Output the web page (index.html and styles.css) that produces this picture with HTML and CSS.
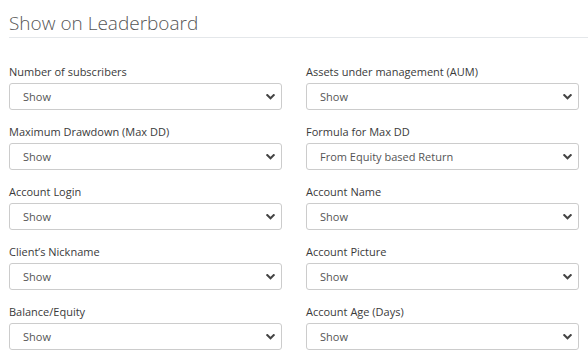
FILE: index.html
```html
<!DOCTYPE html>
<html>
<head>
<meta charset="utf-8">
<link rel="stylesheet" href="styles.css">
</head>
<body>
<div class="panel">
  <h2 class="title">Show on Leaderboard</h2>
  <div class="grid">
    <div class="field"><label>Number of subscribers</label><div class="select"><span>Show</span><svg class="chev" viewBox="0 0 10 7"><path d="M1.2 1.2 L5 5 L8.8 1.2"/></svg></div></div>
    <div class="field"><label>Assets under management (AUM)</label><div class="select"><span>Show</span><svg class="chev" viewBox="0 0 10 7"><path d="M1.2 1.2 L5 5 L8.8 1.2"/></svg></div></div>
    <div class="field"><label>Maximum Drawdown (Max DD)</label><div class="select"><span>Show</span><svg class="chev" viewBox="0 0 10 7"><path d="M1.2 1.2 L5 5 L8.8 1.2"/></svg></div></div>
    <div class="field"><label>Formula for Max DD</label><div class="select"><span>From Equity based Return</span><svg class="chev" viewBox="0 0 10 7"><path d="M1.2 1.2 L5 5 L8.8 1.2"/></svg></div></div>
    <div class="field"><label>Account Login</label><div class="select"><span>Show</span><svg class="chev" viewBox="0 0 10 7"><path d="M1.2 1.2 L5 5 L8.8 1.2"/></svg></div></div>
    <div class="field"><label>Account Name</label><div class="select"><span>Show</span><svg class="chev" viewBox="0 0 10 7"><path d="M1.2 1.2 L5 5 L8.8 1.2"/></svg></div></div>
    <div class="field"><label>Client’s Nickname</label><div class="select"><span>Show</span><svg class="chev" viewBox="0 0 10 7"><path d="M1.2 1.2 L5 5 L8.8 1.2"/></svg></div></div>
    <div class="field"><label>Account Picture</label><div class="select"><span>Show</span><svg class="chev" viewBox="0 0 10 7"><path d="M1.2 1.2 L5 5 L8.8 1.2"/></svg></div></div>
    <div class="field"><label>Balance/Equity</label><div class="select"><span>Show</span><svg class="chev" viewBox="0 0 10 7"><path d="M1.2 1.2 L5 5 L8.8 1.2"/></svg></div></div>
    <div class="field"><label>Account Age (Days)</label><div class="select"><span>Show</span><svg class="chev" viewBox="0 0 10 7"><path d="M1.2 1.2 L5 5 L8.8 1.2"/></svg></div></div>
  </div>
</div>
</body>
</html>
```
FILE: styles.css
```css
html, body {
  margin: 0;
  padding: 0;
  background: #fff;
}
body {
  font-family: "Open Sans", "Liberation Sans", sans-serif;
  color: #333;
}
.panel {
  padding: 0 9px;
}
.title {
  margin: 0 -9px 0 0;
  padding: 11px 0 2px 0;
  font-size: 19px;
  font-weight: 300;
  line-height: 24px;
  color: #555;
  border-bottom: 1px solid #e4e7ea;
}
.grid {
  display: grid;
  grid-template-columns: 273px 273px;
  column-gap: 24px;
  row-gap: 14px;
  padding-top: 26px;
}
.field {
  display: flex;
  flex-direction: column;
}
.field label {
  font-size: 11px;
  line-height: 16px;
  height: 16px;
  margin-bottom: 3px;
  color: #3a3a3a;
}
.select {
  box-sizing: border-box;
  height: 27px;
  border: 1px solid #ccc;
  border-radius: 3px;
  display: flex;
  align-items: center;
  justify-content: space-between;
  padding: 0 6px 0 13px;
  font-size: 11px;
  color: #555;
}
.chev {
  width: 9px;
  height: 6px;
  fill: none;
  stroke: #444;
  stroke-width: 2.3;
  stroke-linecap: square;
}
```
